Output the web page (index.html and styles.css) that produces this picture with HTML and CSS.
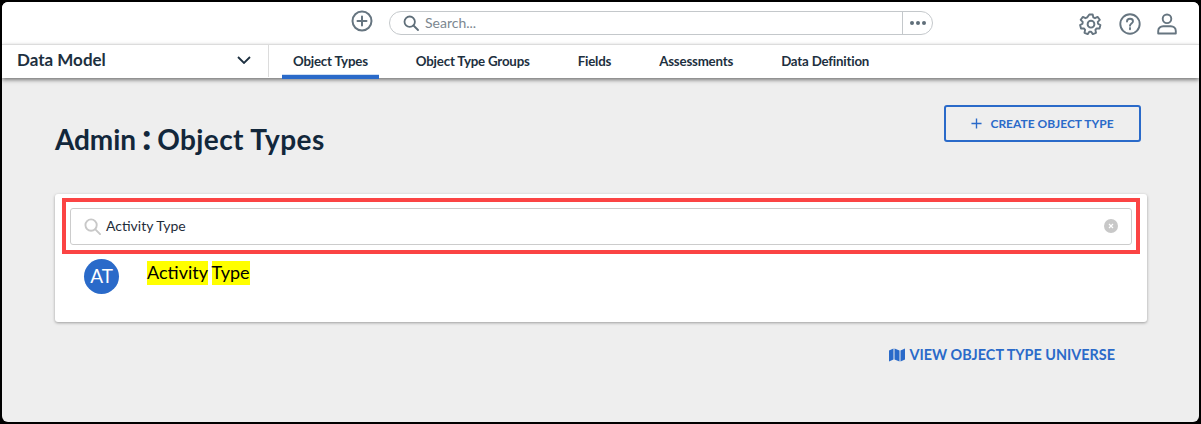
FILE: index.html
```html
<!DOCTYPE html>
<html lang="en">
<head>
<meta charset="utf-8">
<title>Admin: Object Types</title>
<link rel="stylesheet" href="styles.css">
</head>
<body>
<div class="app">
  <header class="topbar">
    <svg class="add-icon" viewBox="0 0 22 22" width="22" height="22"><circle cx="11" cy="11" r="9.5"/><path d="M11 6.5v9M6.5 11h9"/></svg>
    <div class="global-search">
      <svg class="gs-icon" viewBox="0 0 16 16" width="16" height="16"><circle cx="6.7" cy="6.7" r="5.2"/><path d="M10.5 10.5l4.5 4.5"/></svg>
      <span class="gs-text">Search...</span>
      <span class="gs-more"><i></i><i></i><i></i></span>
    </div>
    <div class="top-actions">
      <svg class="top-icon" viewBox="0 0 24 24" width="24" height="24"><path d="M10.3 2.5h3.4l.6 2.9 1.7.8 2.6-1.3 2.2 2.9-2 2 .2 1.900 2.400 1.400-.9 3.400-2.900-.1-1.200 1.500.6 2.900-3.200 1.300-1.600-2.400h-1.900l-1.600 2.400-3.200-1.300.6-2.900-1.200-1.500-2.900.1-.9-3.400 2.400-1.400.2-1.900-2-2 2.200-2.900 2.600 1.300 1.700-.8z" stroke-linejoin="round"/><circle cx="12" cy="12.2" r="3.4"/></svg>
      <svg class="top-icon help" viewBox="0 0 22 22" width="22" height="22"><circle cx="11" cy="11" r="9.7"/><path d="M8 8.500c0-1.800 1.300-2.800 3-2.800s3 1 3 2.500c0 2.300-3 2.300-3 4.500"/><path d="M11 15v1.300"/></svg>
      <svg class="top-icon user" viewBox="0 0 20 22" width="20" height="22"><circle cx="10" cy="5.800" r="4.300"/><path d="M1.200 20.500v-2.500c0-3 2.300-4.800 5-4.800h7.600c2.700 0 5 1.800 5 4.800v2.500z" stroke-linejoin="round"/></svg>
    </div>
  </header>
  <nav class="navbar">
    <div class="module">
      <span class="module-name">Data Model</span>
      <svg class="chevron" viewBox="0 0 14 8" width="14" height="8"><path d="M1 1l6 6 6-6"/></svg>
    </div>
    <ul class="tabs">
      <li class="tab active">Object Types</li>
      <li class="tab">Object Type Groups</li>
      <li class="tab">Fields</li>
      <li class="tab">Assessments</li>
      <li class="tab">Data Definition</li>
    </ul>
  </nav>
  <main class="content">
    <div class="page-head">
      <h1 class="title">Admin<span class="colon">:</span><span class="title-page">Object Types</span></h1>
      <button class="create-btn"><svg viewBox="0 0 12 12" width="11" height="11"><path d="M6 .5v11M.5 6h11"/></svg>CREATE OBJECT TYPE</button>
    </div>
    <section class="card">
      <div class="filter">
        <svg class="filter-icon" viewBox="0 0 18 18" width="17" height="17"><circle cx="7.500" cy="7.500" r="6"/><path d="M12 12l5 5"/></svg>
        <span class="filter-text">Activity Type</span>
        <span class="clear"><svg viewBox="0 0 6 6" width="6" height="6"><path d="M1 1l4 4M5 1l-4 4"/></svg></span>
      </div>
      <div class="callout"></div>
      <div class="result">
        <span class="avatar">AT</span>
        <span class="result-name"><mark>Activity</mark> <mark>Type</mark></span>
      </div>
    </section>
    <div class="universe">
      <a class="universe-link"><svg viewBox="0 0 16 14" width="16" height="14"><path d="M0 2.500 4.500.5v11L0 13.500zM5.500.5l5 2v11l-5-2zM11.500 2.500 16 .5v11l-4.500 2z"/></svg>VIEW OBJECT TYPE UNIVERSE</a>
    </div>
  </main>
</div>
</body>
</html>
```
FILE: styles.css
```css
* { box-sizing: border-box; }
html, body { margin: 0; height: 100%; }
body { background: #000; padding: 2px; font-family: Lato, "Open Sans", sans-serif; color: #12273b; overflow: hidden; }
.app { height: 420px; width: 1197px; background: #eee; border-radius: 6px; overflow: hidden; display: flex; flex-direction: column; }

.topbar { height: 42px; background: #fff; flex: none; display: flex; align-items: center; padding: 0 22px 0 349px; }
.add-icon { fill: none; stroke: #667580; stroke-width: 2; stroke-linecap: round; margin: 0 16px 4px 0; flex: none; }
.global-search { width: 544px; height: 24px; border: 1px solid #c4c8cb; border-radius: 12px; display: flex; align-items: center; padding-left: 13px; }
.gs-icon { fill: none; stroke: #5f6e79; stroke-width: 1.800; stroke-linecap: round; flex: none; margin-bottom: 1px; }
.gs-text { font-size: 14px; color: #7c8790; margin: 0 0 2px 6px; flex: 1; }
.gs-more { width: 30px; height: 22px; border-left: 1px solid #c4c8cb; display: flex; align-items: center; justify-content: center; gap: 2px; }
.gs-more i { width: 4px; height: 4px; border-radius: 50%; background: #5f6e79; }
.top-actions { margin: 2px 0 0 auto; display: flex; align-items: center; gap: 16px; }
.top-icon { fill: none; stroke: #667580; stroke-width: 1.900; stroke-linecap: round; }

.navbar { height: 34px; flex: none; background: #fff; border-top: 1px solid #dcdcdc; display: flex; box-shadow: 0 2px 4px rgba(0,0,0,.5); position: relative; }
.module { width: 267px; height: 32px; border-right: 1px solid #dcdcdc; display: flex; align-items: center; justify-content: space-between; padding: 0 17px 3px 15px; }
.module-name { font-size: 17px; font-weight: 700; color: #1d3040; }
.chevron { fill: none; stroke: #1d3040; stroke-width: 1.800; margin-top: 1px; }
.tabs { list-style: none; margin: 0; padding: 0 0 0 13px; display: flex; gap: 26px; }
.tab { height: 34px; padding: 0 11px; font-size: 13.300px; font-weight: 700; line-height: 32px; color: #1d3040; letter-spacing: -.2px; white-space: nowrap; }
.tab.active { border-bottom: 4px solid #2a6ac9; box-shadow: 0 -1px 0 #cfdff3 inset; }

.content { flex: 1; padding: 27px 52px 0 53px; position: relative; }
.page-head { display: flex; justify-content: space-between; align-items: flex-start; height: 89px; padding-right: 6px; }
.title { margin: 16px 0 0; font-size: 28px; line-height: 36px; font-weight: 700; color: #12273b; letter-spacing: -.1px; display: flex; }
.colon { font-weight: 900; font-size: 36px; line-height: 30px; margin: 0 6px; }
.title-page { letter-spacing: .4px; }
.create-btn { width: 197px; height: 37px; border: 2px solid #2a6ac9; border-radius: 3px; background: transparent; color: #2a6ac9; font: 700 12px Lato, sans-serif; display: flex; align-items: center; justify-content: center; gap: 8px; padding: 0 0 1px; }
.create-btn svg { fill: none; stroke: #2a6ac9; stroke-width: 1.500; }

.card { width: 1092px; height: 128px; background: #fff; border-radius: 3px; box-shadow: 0 1px 3px rgba(0,0,0,.35); padding: 14px 15px 0; position: relative; }
.filter { height: 37px; border: 1px solid #ccc; border-radius: 3px; display: flex; align-items: center; padding: 0 13px 1px; }
.filter-icon { fill: none; stroke: #c8c8c8; stroke-width: 2; stroke-linecap: round; flex: none; }
.filter-text { font-size: 14px; margin: 0 0 1px 5px; flex: 1; color: #1f2d3a; }
.clear { width: 14px; height: 14px; border-radius: 50%; background: #c8c8c8; display: flex; align-items: center; justify-content: center; }
.clear svg { fill: none; stroke: #fff; stroke-width: 1.200; }
.callout { position: absolute; left: 7px; top: 4px; width: 1078px; height: 56px; border: 4px solid #fb4444; pointer-events: none; }
.result { display: flex; align-items: flex-start; padding: 14px 0 0 14px; }
.avatar { width: 35px; height: 35px; border-radius: 50%; background: #2a6ac9; color: #fff; font-size: 19px; padding-bottom: 2px; display: flex; align-items: center; justify-content: center; flex: none; }
.result-name { font-size: 18px; line-height: 24px; margin: 1px 0 0 28px; color: #000; word-spacing: -1px; }
mark { background: #ff0; color: #000; display: inline-block; line-height: 23px; padding-bottom: 1px; }

.universe { display: flex; justify-content: flex-end; padding: 25px 32px 0 0; }
.universe-link { display: flex; align-items: center; gap: 5px; color: #2a6ac9; font-size: 14.400px; font-weight: 700; line-height: 16px; }
.universe-link svg { fill: #2a6ac9; }
```
